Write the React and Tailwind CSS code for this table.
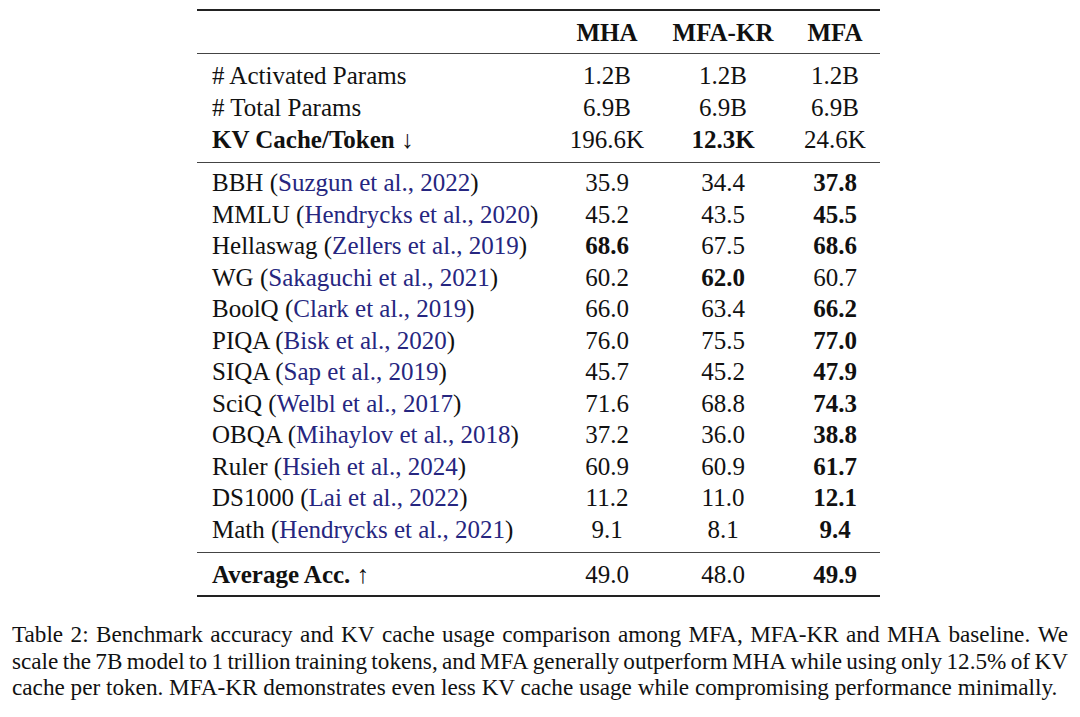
import React from "react";

const params = [
  { label: "# Activated Params", vals: ["1.2B", "1.2B", "1.2B"] },
  { label: "# Total Params", vals: ["6.9B", "6.9B", "6.9B"] },
  { label: "KV Cache/Token", arrow: "↓", bold: true, vals: ["196.6K", "12.3K", "24.6K"], best: 1 },
];

const bench = [
  { name: "BBH", cite: "Suzgun et al., 2022", vals: ["35.9", "34.4", "37.8"], best: [2] },
  { name: "MMLU", cite: "Hendrycks et al., 2020", vals: ["45.2", "43.5", "45.5"], best: [2] },
  { name: "Hellaswag", cite: "Zellers et al., 2019", vals: ["68.6", "67.5", "68.6"], best: [0, 2] },
  { name: "WG", cite: "Sakaguchi et al., 2021", vals: ["60.2", "62.0", "60.7"], best: [1] },
  { name: "BoolQ", cite: "Clark et al., 2019", vals: ["66.0", "63.4", "66.2"], best: [2] },
  { name: "PIQA", cite: "Bisk et al., 2020", vals: ["76.0", "75.5", "77.0"], best: [2] },
  { name: "SIQA", cite: "Sap et al., 2019", vals: ["45.7", "45.2", "47.9"], best: [2] },
  { name: "SciQ", cite: "Welbl et al., 2017", vals: ["71.6", "68.8", "74.3"], best: [2] },
  { name: "OBQA", cite: "Mihaylov et al., 2018", vals: ["37.2", "36.0", "38.8"], best: [2] },
  { name: "Ruler", cite: "Hsieh et al., 2024", vals: ["60.9", "60.9", "61.7"], best: [2] },
  { name: "DS1000", cite: "Lai et al., 2022", vals: ["11.2", "11.0", "12.1"], best: [2] },
  { name: "Math", cite: "Hendrycks et al., 2021", vals: ["9.1", "8.1", "9.4"], best: [2] },
];

const cols = "grid grid-cols-[350px_120px_112px_101px] items-center";

function Cells({ vals, best = [] }) {
  return vals.map((v, i) => (
    <div key={i} className={`text-center ${i === 2 ? "pl-[11px]" : ""} ${best.includes(i) ? "font-bold" : ""}`}>
      {v}
    </div>
  ));
}

function Line({ text }) {
  // justified caption line, words spread across the full width
  return (
    <div className="flex justify-between whitespace-nowrap">
      {text.split(" ").map((w, i) => (
        <span key={i}>{w}</span>
      ))}
    </div>
  );
}

export default function App() {
  return (
    <div className="w-[1080px] h-[717px] bg-white text-[#111] font-[family-name:'Liberation_Serif',serif] overflow-hidden">
      <div className="pt-[9px] pl-[197px]">
        <div className="w-[683px] text-[25px] leading-none">
          <div className="h-[2px] bg-[#222]" />
          <div className={`${cols} h-[42px] font-bold`}>
            <div />
            <div className="text-center">MHA</div>
            <div className="text-center">MFA-KR</div>
            <div className="text-center pl-[11px]">MFA</div>
          </div>
          <div className="h-px bg-[#444]" />

          <div className="pt-[5px] pb-[7px]">
            {params.map((r) => (
              <div key={r.label} className={`${cols} h-[32px]`}>
                <div className="pl-[15px]">
                  <span className={r.bold ? "font-bold" : ""}>{r.label}</span>
                  {r.arrow && <span> {r.arrow}</span>}
                </div>
                <Cells vals={r.vals} best={r.best !== undefined ? [r.best] : []} />
              </div>
            ))}
          </div>
          <div className="h-px bg-[#444]" />

          <div className="pt-[4px] pb-[7px]">
            {bench.map((r) => (
              <div key={r.name} className={`${cols} h-[31.5px]`}>
                <div className="pl-[15px] whitespace-nowrap">
                  {r.name} (<span className="text-[#262680]">{r.cite}</span>)
                </div>
                <Cells vals={r.vals} best={r.best} />
              </div>
            ))}
          </div>
          <div className="h-px bg-[#444]" />

          <div className={`${cols} h-[42px]`}>
            <div className="pl-[15px]">
              <span className="font-bold">Average Acc.</span> ↑
            </div>
            <Cells vals={["49.0", "48.0", "49.9"]} best={[2]} />
          </div>
          <div className="h-[2px] bg-[#222]" />
        </div>
      </div>

      <div className="mt-[24px] px-[12px] w-[1080px] text-[23.2px] leading-[26.5px]">
        <Line text="Table 2: Benchmark accuracy and KV cache usage comparison among MFA, MFA-KR and MHA baseline. We" />
        <Line text="scale the 7B model to 1 trillion training tokens, and MFA generally outperform MHA while using only 12.5% of KV" />
        <div className="whitespace-nowrap">
          cache per token. MFA-KR demonstrates even less KV cache usage while compromising performance minimally.
        </div>
      </div>
    </div>
  );
}
